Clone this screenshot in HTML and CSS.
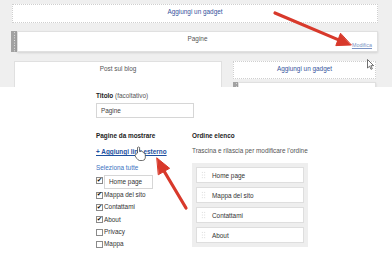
FILE: index.html
```html
<!DOCTYPE html>
<html lang="it">
<head>
    <meta charset="UTF-8">
    <meta name="viewport" content="width=device-width, initial-scale=1.0">
    <link rel="stylesheet" href="styles.css">
    <title>Layout - Pagine</title>
</head>
<body>
    <div class="layout">
        <div class="gadget wide">Aggiungi un gadget</div>

        <div class="widget">
            <div class="handle"></div>
            <div class="widget-box">
                <div class="widget-title">Pagine</div>
                <a class="edit" href="#">Modifica</a>
            </div>
        </div>

        <div class="columns-row">
            <div class="main-box">Post sul blog</div>
            <div class="sidebar">
                <div class="gadget">Aggiungi un gadget</div>
                <div class="widget small">
                    <div class="handle"></div>
                    <div class="widget-box"></div>
                </div>
            </div>
        </div>
    </div>

    <div class="dialog">
        <div class="label"><b>Titolo</b> (facoltativo)</div>
        <div class="text-input">Pagine</div>

        <div class="dialog-cols">
            <div class="col-left">
                <div class="heading">Pagine da mostrare</div>
                <a class="add-link" href="#">+ Aggiungi link esterno</a>
                <a class="select-all" href="#">Seleziona tutte</a>

                <div class="check-row first">
                    <span class="checkbox checked"></span>
                    <span class="page-name">Home page</span>
                </div>
                <div class="check-row"><span class="checkbox checked"></span>Mappa del sito</div>
                <div class="check-row"><span class="checkbox checked"></span>Contattami</div>
                <div class="check-row"><span class="checkbox checked"></span>About</div>
                <div class="check-row"><span class="checkbox"></span>Privacy</div>
                <div class="check-row"><span class="checkbox"></span>Mappa</div>
            </div>

            <div class="col-right">
                <div class="heading">Ordine elenco</div>
                <div class="hint">Trascina e rilascia per modificare l'ordine</div>
                <div class="order-list">
                    <div class="order-item"><span class="grip"></span>Home page</div>
                    <div class="order-item"><span class="grip"></span>Mappa del sito</div>
                    <div class="order-item"><span class="grip"></span>Contattami</div>
                    <div class="order-item"><span class="grip"></span>About</div>
                </div>
            </div>
        </div>
    </div>

    <!-- annotation arrows + cursors drawn over the screenshot -->
    <svg class="overlay" width="392" height="262" viewBox="0 0 392 262">
        <g stroke="#d8392b" stroke-width="3.2" stroke-linecap="round" fill="#d8392b">
            <line x1="275" y1="13" x2="338" y2="39.6" />
            <polygon points="351,45 335.8,45.6 340.4,33.6" stroke-width="1" stroke-linejoin="round" />
            <line x1="186" y1="208" x2="164" y2="171" />
            <polygon points="157,158 169.6,168.3 158.6,174.6" stroke-width="1" stroke-linejoin="round" />
        </g>
        <path d="M367.5 59.5 L367.5 68 L369.6 66.2 L371 69.3 L372.3 68.7 L370.9 65.7 L373.6 65.6 Z" fill="#fff" stroke="#333" stroke-width="0.7" />
        <path d="M137.5 153 L137.5 147.5 Q138.6 146.5 139.6 147.5 L139.6 151.5 L141.5 151.2 Q143 151.5 143.3 152.6 L144 153 Q145.3 153.3 145.3 154.8 L145.3 158 Q144.8 160.5 142.5 160.5 L139.5 160.5 Q137.8 160 136.8 158.5 L135 155.8 Q134.8 154.5 136 154.4 Z" fill="#fff" stroke="#333" stroke-width="0.7" />
    </svg>
</body>
</html>
```

FILE: styles.css
```css
body {
    margin: 0;
    width: 392px;
    height: 262px;
    overflow: hidden;
    position: relative;
    font-family: "Liberation Sans", Arial, sans-serif;
    font-size: 6.4px;
    color: #222;
    background: #fff;
}

a {
    text-decoration: none;
}

/* ---------- layout editor in the background ---------- */

.layout {
    height: 87px;
    box-sizing: border-box;
    padding: 4px 14px 0 12px;
    background: #efefef;
    overflow: hidden;
}

.gadget {
    height: 18px;
    box-sizing: border-box;
    border: 1px dotted #cfcfcf;
    background: #fff;
    text-align: center;
    line-height: 13px;
    color: #36539c;
}

.gadget.wide {
    height: 19px;
    line-height: 13px;
}

.widget {
    display: flex;
    height: 21px;
    margin: 8px 0 0 -1px;
}

.handle {
    width: 6px;
    background-color: #a2a2a2;
    background-image: radial-gradient(#e6e6e6 0.7px, transparent 0.9px);
    background-size: 3px 2.6px;
    background-position: 1.5px 3px;
    background-repeat: repeat-y;
}

.widget-box {
    flex: 1;
    display: flex;
    flex-direction: column;
    background: #fff;
    border: 1px solid #e0e0e0;
    box-shadow: 0 1px 2px rgba(0, 0, 0, 0.12);
}

.widget-title {
    text-align: center;
    line-height: 13px;
    color: #555;
}

.edit {
    align-self: flex-end;
    margin: -4px 5px 0 0;
    font-size: 5.4px;
    line-height: 8px;
    color: #7b93c4;
    text-decoration: underline;
}

.columns-row {
    display: flex;
    margin-top: 9px;
}

.main-box {
    width: 208px;
    height: 40px;
    box-sizing: border-box;
    margin-left: 2px;
    background: #fff;
    border: 1px solid #e0e0e0;
    text-align: center;
    line-height: 13px;
    color: #555;
}

.sidebar {
    width: 143px;
    margin-left: 11px;
}

.widget.small {
    margin: 3px 0 0;
}

.widget.small .handle {
    width: 5px;
}

/* ---------- settings dialog ---------- */

.dialog {
    height: 175px;
    box-sizing: border-box;
    padding: 4px 0 0 96px;
    background: #fff;
}

.label {
    line-height: 10px;
    color: #555;
}

.label b {
    color: #222;
}

.text-input {
    width: 98px;
    height: 15px;
    box-sizing: border-box;
    margin-top: 2px;
    padding-left: 4px;
    border: 1px solid #d6d6d6;
    line-height: 13px;
    color: #444;
}

.dialog-cols {
    display: flex;
    margin-top: 13px;
}

.col-left {
    width: 96px;
    display: flex;
    flex-direction: column;
    align-items: flex-start;
}

.heading {
    font-weight: bold;
    line-height: 10px;
    color: #222;
}

.add-link {
    margin-top: 6px;
    line-height: 10px;
    font-weight: bold;
    color: #1c4f9f;
    text-decoration: underline;
}

.select-all {
    margin-top: 6px;
    line-height: 10px;
    color: #3b73c2;
}

.check-row {
    display: flex;
    align-items: center;
    gap: 1px;
    line-height: 12.3px;
    color: #333;
}

.check-row.first {
    align-items: flex-start;
    margin-top: 2px;
    line-height: 12px;
}

.check-row.first .checkbox {
    margin-top: 2px;
}

.checkbox {
    width: 7px;
    height: 7px;
    box-sizing: border-box;
    border: 1px solid #8a8a8a;
    background: #fff;
    display: flex;
    align-items: center;
    justify-content: center;
    font-family: "DejaVu Sans", sans-serif;
    font-size: 6.5px;
    line-height: 1;
    color: #111;
}

.checkbox.checked::after {
    content: "\2714";
    margin-top: -1px;
}

.page-name {
    width: 49px;
    height: 14px;
    box-sizing: border-box;
    padding-left: 4px;
    border: 1px solid #d6d6d6;
    line-height: 12px;
}

.col-right {
    display: flex;
    flex-direction: column;
}

.hint {
    margin-top: 5px;
    line-height: 10px;
    color: #555;
}

.order-list {
    width: 116px;
    box-sizing: border-box;
    margin-top: 7px;
    padding: 4px;
    display: flex;
    flex-direction: column;
    gap: 4px;
    background: #eeeeee;
}

.order-item {
    height: 16px;
    box-sizing: border-box;
    display: flex;
    align-items: center;
    gap: 6px;
    padding-left: 4px;
    background: #fff;
    border: 1px solid #dedede;
    color: #333;
}

.grip {
    width: 5px;
    height: 8px;
    background-image: radial-gradient(#cfcfcf 0.6px, transparent 0.8px);
    background-size: 2.5px 2.7px;
}

.overlay {
    position: absolute;
    top: 0;
    left: 0;
    pointer-events: none;
}
```
